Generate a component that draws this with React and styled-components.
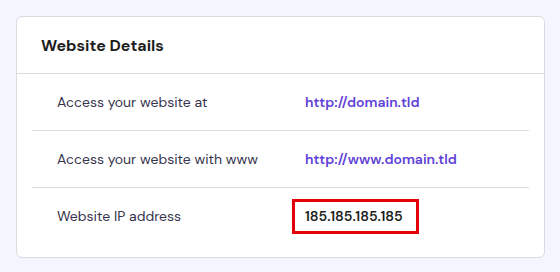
import React from "react";
import styled, { createGlobalStyle } from "styled-components";

const Global = createGlobalStyle`
  html, body { margin: 0; padding: 0; background: #f4f5ff; }
  body { font-family: "DM Sans", Inter, "Noto Sans", sans-serif; }
  #root { padding: 16px 15px 14px 16px; }
`;

const Card = styled.section`
  background: #ffffff;
  border: 1px solid #dadce0;
  border-radius: 6px;
  padding-bottom: 13px;
`;

const Header = styled.header`
  height: 56px;
  display: flex;
  align-items: center;
  padding-left: 24px;
  border-bottom: 1px solid #dadce0;
`;

const Title = styled.h2`
  margin: 0;
  font-size: 16px;
  font-weight: 700;
  color: #1d1e20;
`;

const List = styled.div`
  padding: 0 15px;
`;

const Row = styled.div`
  height: 56px;
  display: grid;
  grid-template-columns: 235px 1fr;
  align-items: center;
  padding-left: 25px;
  border-bottom: ${(p) => (p.$last ? "none" : "1px solid #dadce0")};
`;

const Label = styled.span`
  font-size: 14px;
  color: #36344d;
`;

const Value = styled.span`
  justify-self: start;
  display: inline-flex;
  align-items: center;
  height: 29px;
  padding: 0 13px 0 10px;
  border: 3px solid ${(p) => (p.$highlight ? "#e3000b" : "transparent")};
  font-size: 14px;
  font-weight: 600;
  color: ${(p) => (p.$link ? "#6142d6" : "#1d1e20")};
`;

const rows = [
  { label: "Access your website at", value: "http://domain.tld", link: true },
  { label: "Access your website with www", value: "http://www.domain.tld", link: true },
  { label: "Website IP address", value: "185.185.185.185", highlight: true },
];

export default function App() {
  return (
    <>
      <Global />
      <Card>
        <Header>
          <Title>Website Details</Title>
        </Header>
        <List>
          {rows.map((r, i) => (
            <Row key={r.label} $last={i === rows.length - 1}>
              <Label>{r.label}</Label>
              <Value $link={r.link} $highlight={r.highlight}>
                {r.value}
              </Value>
            </Row>
          ))}
        </List>
      </Card>
    </>
  );
}
